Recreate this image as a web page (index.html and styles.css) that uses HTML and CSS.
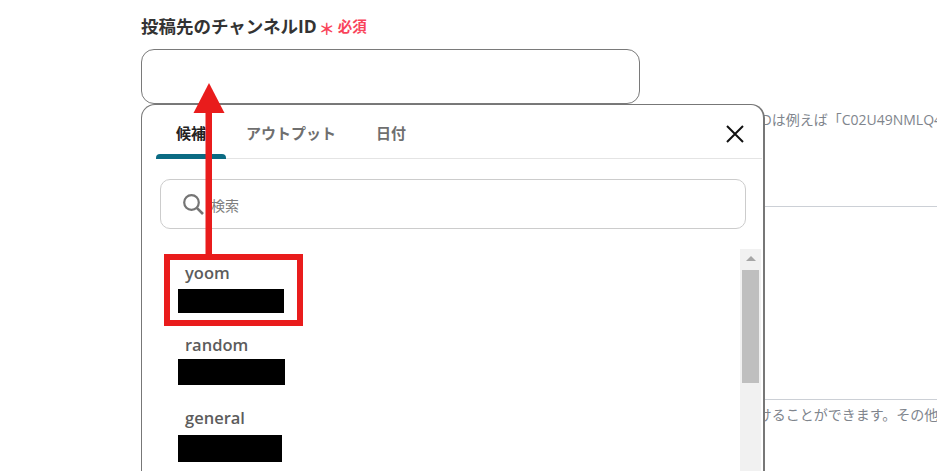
FILE: index.html
```html
<!DOCTYPE html>
<html lang="ja">
<head>
<meta charset="utf-8">
<title>投稿先のチャンネルID</title>
<link rel="stylesheet" href="styles.css">
</head>
<body>
<main class="form">
  <div class="label-row">
    <span class="label">投稿先のチャンネルID</span>
    <span class="star">＊</span>
    <span class="required">必須</span>
  </div>
  <div class="field"></div>
  <p class="hint hint-first">チャンネルIDは例えば「C02U49NMLQ4</p>
  <hr class="rule rule-first">
  <hr class="rule rule-second">
  <p class="hint hint-second">メッセージにファイルを添付し、リンクをつけることができます。その他</p>
</main>

<section class="popup">
  <div class="tabs">
    <span class="tab tab-active">候補</span>
    <span class="tab">アウトプット</span>
    <span class="tab">日付</span>
    <svg class="close" width="20" height="20" viewBox="0 0 20 20"><path d="M2 2 18 18M18 2 2 18" stroke="#111" stroke-width="2" fill="none"/></svg>
  </div>
  <div class="search">
    <svg class="search-icon" width="22" height="22" viewBox="0 0 22 22"><circle cx="9.500" cy="9.500" r="7.300" stroke="#757575" stroke-width="2.200" fill="none"/><path d="M14.800 14.800 21 21" stroke="#757575" stroke-width="2.600" fill="none"/></svg>
    <span class="placeholder">検索</span>
  </div>
  <div class="results">
    <ul class="list">
      <li class="item"><span class="name">yoom</span><span class="redact redact-a"></span></li>
      <li class="item"><span class="name">random</span><span class="redact redact-b"></span></li>
      <li class="item"><span class="name">general</span><span class="redact redact-c"></span></li>
    </ul>
    <div class="scrollbar">
      <span class="scroll-up"></span>
      <span class="scroll-thumb"></span>
    </div>
  </div>
</section>

<div class="mark-box"></div>
<svg class="mark-arrow" width="34" height="172" viewBox="0 0 34 172"><path d="M13.500 30h6.500v142h-6.500z" fill="#e91c1c"/><path d="M17 0 32.500 30H1.500z" fill="#e91c1c"/></svg>
</body>
</html>
```
FILE: styles.css
```css
* { box-sizing: border-box; }
html, body { margin: 0; height: 100%; overflow: hidden; background: #fff; }
body { font-family: "Open Sans", "Noto Sans CJK JP", sans-serif; color: #333; }

.form { padding: 13px 0 0 141px; }
.label-row { display: flex; align-items: center; height: 24px; }
.label { font-size: 17.500px; font-weight: 700; color: #333; }
.star { color: #f9445a; font-size: 16px; font-weight: 700; line-height: 24px; margin: 8px 3px 0 0; width: 18px; text-align: right; }
.required { color: #f9445a; font-size: 14.500px; font-weight: 700; }
.field { width: 499px; height: 55px; margin-top: 12px; border: 1px solid #7a7a7a; border-radius: 13px; background: #fff; }

.hint { margin: 0; font-size: 14px; line-height: 18px; color: #80858d; white-space: nowrap; }
.hint-first { margin-top: 7px; padding-left: 547px; }
.hint-second { margin-top: 6px; padding-left: 337px; }
.rule { border: 0; height: 1px; background: #ccd0d6; margin: 0; }
.rule-first { margin-top: 77px; }
.rule-second { margin-top: 192px; }

.popup { position: absolute; left: 141px; top: 104px; width: 624px; height: 520px; background: #fff; border: 2px solid #777; border-bottom: 0; border-radius: 14px 14px 0 0; border-width: 1px 2px 0 1px; }

.tabs { position: relative; display: flex; height: 54px; margin: 0 1px 0 14px; border-bottom: 1px solid #e4e4e4; }
.tab { padding-top: 16px; text-align: center; font-size: 15px; font-weight: 700; line-height: 24px; color: #6f6f6f; }
.tab:nth-child(1) { width: 70px; }
.tab:nth-child(2) { width: 130px; }
.tab:nth-child(3) { width: 70px; }
.tab-active { position: relative; color: #222; }
.tab-active::after { content: ""; position: absolute; left: 0; right: 0; bottom: -1px; height: 5px; background: #0b6b83; border-radius: 4px 4px 0 0; }
.close { position: absolute; right: 17px; top: 19px; }

.search { display: flex; align-items: center; width: 586px; height: 50px; margin: 20px 0 0 18px; padding-left: 21px; border: 1px solid #ccc; border-radius: 10px; }
.search-icon { flex: none; }
.placeholder { margin: 2px 0 0 7px; font-size: 14px; color: #7d7d7d; }

.results { display: flex; justify-content: space-between; margin-top: 20px; padding-right: 2px; }
.list { list-style: none; margin: 0; padding: 12px 0 0 36px; }
.item { display: flex; flex-direction: column; align-items: flex-start; }
.name { padding-left: 7px; font-size: 16.500px; line-height: 24px; font-weight: 600; color: #5c5c5c; }
.redact { display: block; background: #000; }
.redact-a { width: 106px; height: 24px; margin: 4px 0 20px; }
.redact-b { width: 107px; height: 26px; margin: 2px 0 21px; }
.redact-c { width: 104px; height: 27px; margin-top: 5px; }

.scrollbar { position: relative; flex: none; width: 21px; height: 300px; background: #f1f1f1; }
.scroll-up { position: absolute; left: 6px; top: 7px; border-left: 5px solid transparent; border-right: 5px solid transparent; border-bottom: 5px solid #a6a6a6; }
.scroll-thumb { position: absolute; left: 2px; top: 21px; width: 17px; height: 113px; background: #bfbfbf; }

.mark-box { position: absolute; left: 164px; top: 254px; width: 139px; height: 72px; border: 6px solid #e91c1c; }
.mark-arrow { position: absolute; left: 192px; top: 83px; }
```
